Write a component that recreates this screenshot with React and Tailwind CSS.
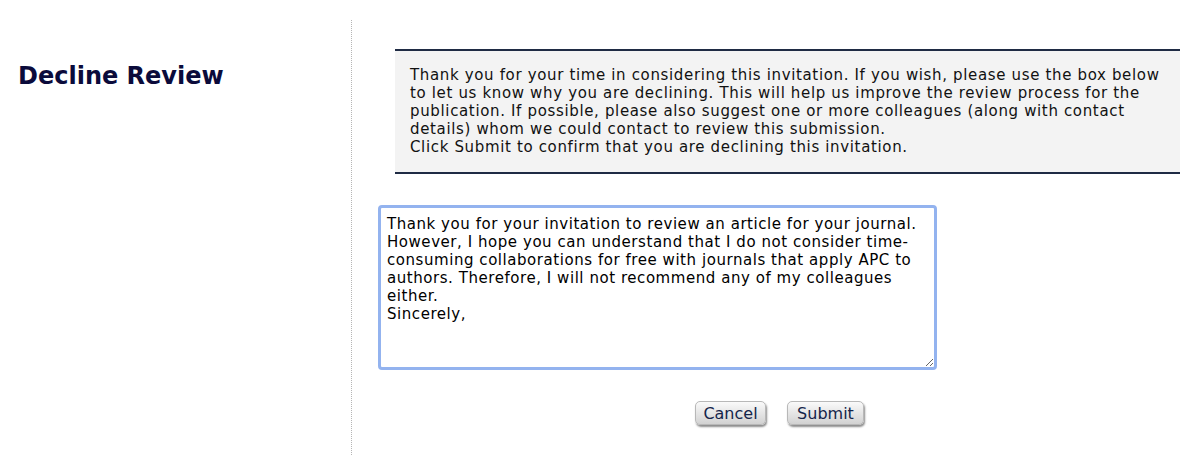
import { useState } from "react";

const INFO_LINES = [
  "Thank you for your time in considering this invitation. If you wish, please use the box below",
  "to let us know why you are declining. This will help us improve the review process for the",
  "publication. If possible, please also suggest one or more colleagues (along with contact",
  "details) whom we could contact to review this submission.",
  "Click Submit to confirm that you are declining this invitation.",
];

const DEFAULT_REPLY =
  "Thank you for your invitation to review an article for your journal. However, I hope you can understand that I do not consider time-consuming collaborations for free with journals that apply APC to authors. Therefore, I will not recommend any of my colleagues either.\nSincerely,";

const App = () => {
  const [reply, setReply] = useState(DEFAULT_REPLY);

  return (
    <div className="flex pt-5 bg-white text-black font-['DejaVu_Sans',Verdana,sans-serif]">
      {/* left title column */}
      <div className="w-[351px] shrink-0 pl-[18px] pt-[42px]">
        <h1 className="text-[24px] leading-[28px] font-bold text-[#0b0b3b]">
          Decline Review
        </h1>
      </div>

      {/* main column */}
      <div className="h-[435px] border-l border-dotted border-[#b5b5b5] pl-[26px] pt-[29px]">
        <div className="ml-[17px] w-[785px] border-y-2 border-[#1f2b44] bg-[#f3f3f3] pl-[15px] pt-[15px] pb-[16px] text-[15px] leading-[18px] tracking-[0.65px] text-[#111]">
          {INFO_LINES.map((line) => (
            <div key={line} className="whitespace-nowrap">
              {line}
            </div>
          ))}
        </div>

        <textarea
          value={reply}
          onChange={(e) => setReply(e.target.value)}
          className="mt-[31px] block w-[559px] h-[165px] rounded-[4px] border-[3px] border-[#93b3ef] bg-white pl-[6px] pr-[4px] pt-[7px] text-[15px] leading-[18px] tracking-[0.55px] text-black outline-none font-['DejaVu_Sans',Verdana,sans-serif]"
        />

        <div className="mt-[31px] ml-[317px] flex gap-[21px]">
          <button className="h-[24px] w-[71px] rounded-[5px] border border-[#b8b8b8] bg-gradient-to-b from-[#fafafa] to-[#d2d2d2] text-[16px] text-[#14244a] shadow-[1px_2px_2px_rgba(0,0,0,0.45)]">
            Cancel
          </button>
          <button className="h-[24px] w-[77px] rounded-[5px] border border-[#b8b8b8] bg-gradient-to-b from-[#fafafa] to-[#d2d2d2] text-[16px] text-[#14244a] shadow-[1px_2px_2px_rgba(0,0,0,0.45)]">
            Submit
          </button>
        </div>
      </div>
    </div>
  );
};

export default App;
